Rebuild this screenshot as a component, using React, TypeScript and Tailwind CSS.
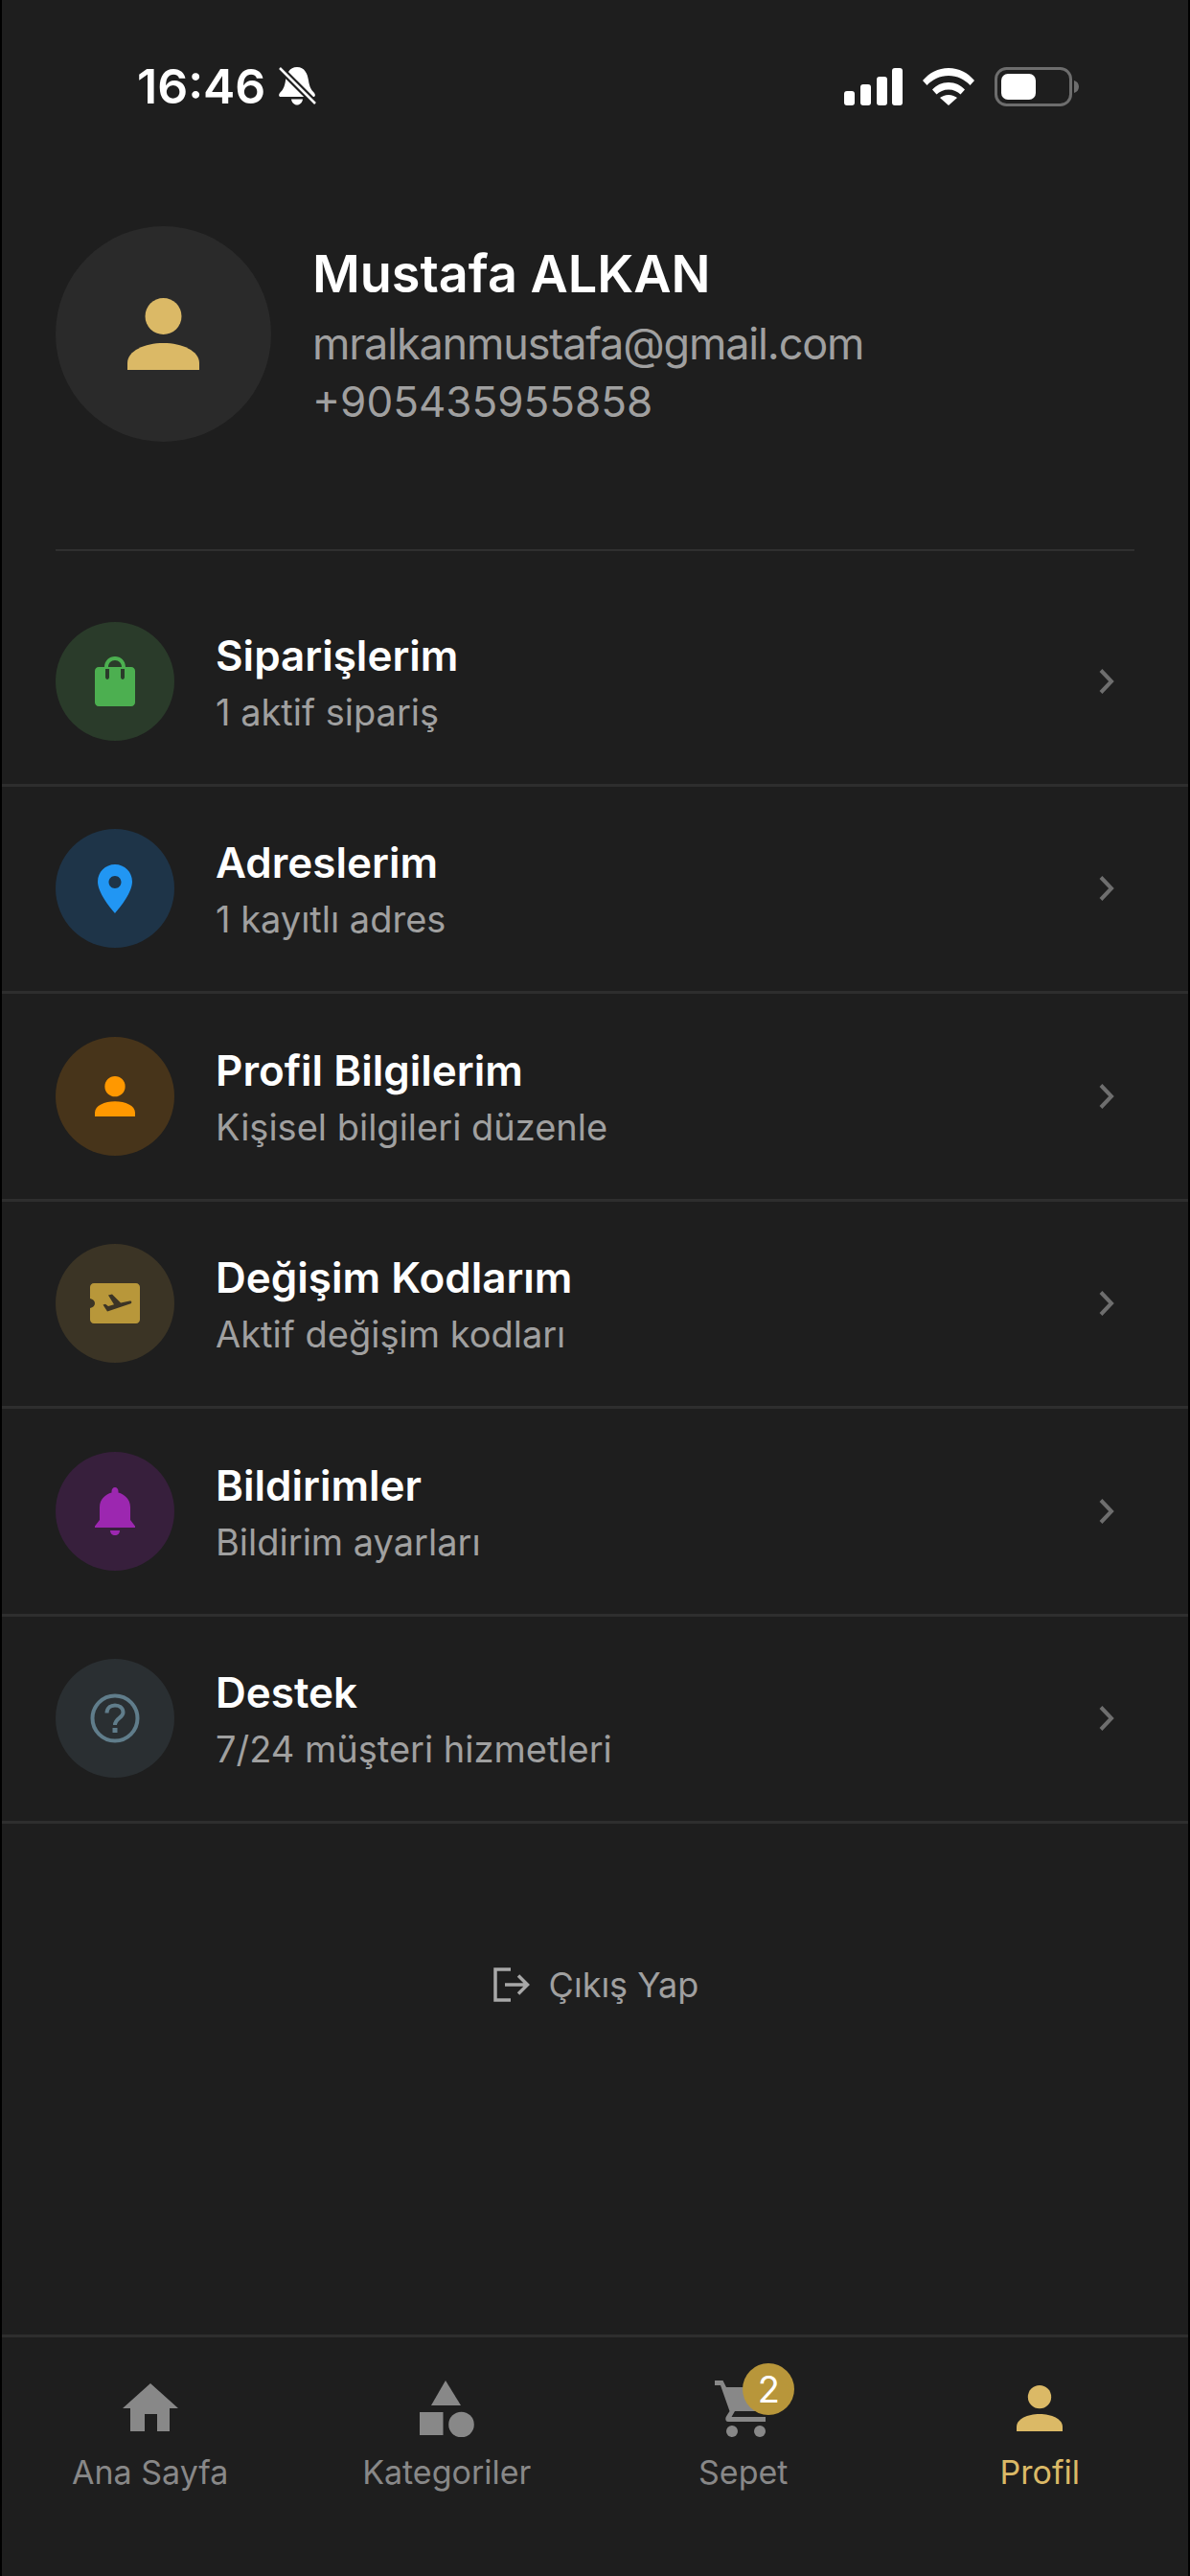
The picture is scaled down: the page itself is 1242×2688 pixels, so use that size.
import React from "react";

const font = { fontFamily: "Inter, 'Noto Sans', sans-serif" };

const PersonIcon = ({ className }: { className: string }) => (
  <svg viewBox="0 0 75 75" className={className} fill="currentColor">
    <circle cx="37.5" cy="19" r="19" />
    <path d="M0 75V68C0 55 18 47 37.5 47C57 47 75 55 75 68V75Z" />
  </svg>
);

const BagIcon = () => (
  <svg viewBox="0 0 42 52" className="w-[42px] h-[52px] text-[#4caf50]" fill="currentColor">
    <path
      fillRule="evenodd"
      d="M10 11C10 4.5 15 0 21 0C27 0 32 4.5 32 11H38C40.2 11 42 12.8 42 15V48C42 50.2 40.2 52 38 52H4C1.8 52 0 50.2 0 48V15C0 12.8 1.800 11 4 11ZM14 11H28C28 7 25 4 21 4C17 4 14 7 14 11ZM11 13V21.5C11 23 12 24 13 24C14 24 15 23 15 21.5V13ZM27 13V21.5C27 23 28 24 29 24C30 24 31 23 31 21.5V13Z"
    />
  </svg>
);

const PinIcon = () => (
  <svg viewBox="0 0 36 51" className="w-[36px] h-[51px] text-[#2196f3]" fill="currentColor">
    <path
      fillRule="evenodd"
      d="M18 0C8 0 0 7.800 0 18C0 29 12 44 18 51C24 44 36 29 36 18C36 7.800 28 0 18 0ZM18 12C21.600 12 24.500 14.900 24.500 18.500C24.500 22.100 21.600 25 18 25C14.400 25 11.500 22.100 11.500 18.500C11.500 14.900 14.400 12 18 12Z"
    />
  </svg>
);

const TicketIcon = () => (
  <svg viewBox="0 0 52 42" className="w-[52px] h-[42px]">
    <path
      fill="#b8973a"
      d="M4 0H48C50.200 0 52 1.800 52 4V38C52 40.200 50.200 42 48 42H4C1.800 42 0 40.200 0 38V26C3 25.500 5 23.500 5 21C5 18.500 3 16.500 0 16V4C0 1.800 1.800 0 4 0Z"
    />
    <path
      fill="#3b3425"
      d="M19 12.500L23 11.500L32 20.500L41.500 18.500C43.500 18 44 20.500 42.500 21.300L18 29.500L13.500 22.500L16 21.700L19 24L25 22.300Z"
    />
  </svg>
);

const BellIcon = () => (
  <svg viewBox="0 0 42 50" className="w-[42px] h-[50px] text-[#9c27b0]" fill="currentColor">
    <path d="M17.500 5.500V4C17.500 1.800 19 0 21 0C23 0 24.500 1.800 24.500 4V5.500C31 7.500 37 12 37 21V34L42 40.500V42H0V40.500L5 34V21C5 12 11 7.500 17.500 5.500Z" />
    <path d="M16 45H26C26 48 24 50 21 50C18 50 16 48 16 45Z" />
  </svg>
);

const HelpIcon = () => (
  <svg viewBox="0 0 52 52" className="w-[52px] h-[52px] text-[#607d8b]" fill="none" stroke="currentColor">
    <circle cx="26" cy="26" r="23.500" strokeWidth="4" />
    <path d="M17.500 20.500C17.500 15.500 21 12.500 26 12.500C31 12.500 34.500 15.500 34.500 20C34.500 25.500 26 26 26 33" strokeWidth="4" />
    <rect x="23.500" y="36" width="5" height="5" fill="currentColor" stroke="none" />
  </svg>
);

const Chevron = () => (
  <svg viewBox="0 0 18 28" className="w-[18px] h-[28px] text-[#6e6e6e]" fill="none" stroke="currentColor" strokeWidth="4">
    <path d="M3 2.500L14 14L3 25.500" />
  </svg>
);

const rows = [
  { title: "Siparişlerim", sub: "1 aktif sipariş", bg: "bg-[#2a3b2a]", icon: <BagIcon /> },
  { title: "Adreslerim", sub: "1 kayıtlı adres", bg: "bg-[#1e3448]", icon: <PinIcon /> },
  {
    title: "Profil Bilgilerim",
    sub: "Kişisel bilgileri düzenle",
    bg: "bg-[#47341a]",
    icon: <PersonIcon className="w-[42px] h-[42px] text-[#ff9800]" />,
  },
  { title: "Değişim Kodlarım", sub: "Aktif değişim kodları", bg: "bg-[#3b3425]", icon: <TicketIcon /> },
  { title: "Bildirimler", sub: "Bildirim ayarları", bg: "bg-[#371f3c]", icon: <BellIcon /> },
  { title: "Destek", sub: "7/24 müşteri hizmetleri", bg: "bg-[#2a2f32]", icon: <HelpIcon /> },
];

const MenuRow = ({ title, sub, bg, icon }: { title: string; sub: string; bg: string; icon: React.ReactNode }) => (
  <div className="h-[216.5px] flex items-center pl-[56px] pr-[76px] border-b-[3px] border-[#2e2e2e]">
    <div className={`w-[124px] h-[124px] rounded-full flex items-center justify-center ${bg}`}>{icon}</div>
    <div className="ml-[43px] flex-1 pt-[3px]">
      <div className="text-[44px] leading-[54px] font-semibold text-white">{title}</div>
      <div className="mt-[7px] text-[38px] leading-[50px] text-[#a0a0a0]">{sub}</div>
    </div>
    <Chevron />
  </div>
);

const NavItem = ({ icon, label, active }: { icon: React.ReactNode; label: string; active?: boolean }) => (
  <div className="flex flex-col items-center">
    <div className="h-[70px] flex items-end justify-center">{icon}</div>
    <div className={`mt-[15px] text-[34px] leading-[44px] ${active ? "text-[#dbb966]" : "text-[#888888]"}`}>{label}</div>
  </div>
);

export default function App() {
  return (
    <div className="w-[1242px] h-[2688px] bg-[#1e1e1e] border-x-2 border-black flex flex-col" style={font}>
      {/* Status bar */}
      <div className="flex justify-between items-center pt-[68px] pl-[141px] pr-[114px] h-[112px]">
        <div className="flex items-center gap-[14px]">
          <span className="text-[50px] leading-[44px] font-semibold text-white">16:46</span>
          <svg viewBox="0 0 40 40" className="w-[40px] h-[40px] text-white" fill="currentColor">
            <path d="M19 0C27 0 30 7 31 14C32 21 34 24 37 27C38.500 29 38 31 36 31H2C0 31 -.5 29 1 27C4 24 6 21 7 14C8 7 11 0 19 0Z" />
            <path d="M13 33.500H25C24.500 37 22 39.500 19 39.500C16 39.500 13.500 37 13 33.500Z" />
            <path d="M1 1L39 39" stroke="#1e1e1e" strokeWidth="7" />
            <path d="M1 1L38 38" stroke="currentColor" strokeWidth="2.500" />
          </svg>
        </div>
        <div className="flex items-center gap-[21px]">
          <svg viewBox="0 0 61 39" className="w-[61px] h-[39px] text-white" fill="currentColor">
            <rect x="0" y="24" width="11" height="15" rx="3" />
            <rect x="17" y="17" width="11" height="22" rx="3" />
            <rect x="34" y="9" width="11" height="30" rx="3" />
            <rect x="50" y="0" width="11" height="39" rx="3" />
          </svg>
          <svg viewBox="0 0 54 39" className="w-[54px] h-[39px] text-white" fill="currentColor">
            <path d="M0 13C7 5 16 0 27 0C38 0 47 5 54 13L49.500 18C44 12 36 8 27 8C18 8 10 12 4.500 18Z" />
            <path d="M10 22.500C14 18 20 15 27 15C34 15 40 18 44 22.500L39.500 27.500C36.500 24.500 32 22.500 27 22.500C22 22.500 17.500 24.500 14.500 27.500Z" />
            <path d="M18 31C20 29.500 23.500 28 27 28C30.500 28 34 29.500 36 31L27 39Z" />
          </svg>
          <svg viewBox="0 0 88 41" className="w-[88px] h-[41px]">
            <rect x="1.500" y="1.500" width="78" height="38" rx="11" fill="none" stroke="#6d6d6d" strokeWidth="3" />
            <rect x="7" y="7" width="36" height="27" rx="7" fill="#ffffff" />
            <path d="M83 14C86 15 88 17 88 20.500C88 24 86 26 83 27Z" fill="#6d6d6d" />
          </svg>
        </div>
      </div>

      {/* Profile header */}
      <div className="mt-[124px] mx-[56px] flex items-start pb-[112px] border-b-[2px] border-[#303030]">
        <div className="w-[225px] h-[225px] rounded-full bg-[#2a2a2a] flex items-center justify-center">
          <PersonIcon className="w-[75px] h-[75px] text-[#dbb966]" />
        </div>
        <div className="ml-[43px] pt-[18px]">
          <div className="text-[54px] leading-[64px] font-semibold text-white">Mustafa ALKAN</div>
          <div className="mt-[11px] text-[45px] leading-[60px] tracking-[-1.15px] text-[#a0a0a0]">mralkanmustafa@gmail.com</div>
          <div className="text-[44px] leading-[60px] text-[#a0a0a0]">+905435955858</div>
        </div>
      </div>

      {/* Menu */}
      <div className="mt-[29px]">
        {rows.map((r) => (
          <MenuRow key={r.title} {...r} />
        ))}
      </div>

      {/* Logout */}
      <div className="mt-[140px] flex items-center justify-center gap-[20px] pl-[2px]">
        <svg viewBox="0 0 38 36" className="w-[38px] h-[36px] text-[#a8a8a8]" fill="none" stroke="currentColor" strokeWidth="3.500">
          <path d="M18 2H2V34H18" />
          <path d="M12 18H35M26 8.500L35.500 18L26 27.500" />
        </svg>
        <span className="text-[36px] leading-[56px] text-[#a0a0a0]">Çıkış Yap</span>
      </div>

      {/* Bottom nav */}
      <div className="mt-auto h-[252px] border-t-[3px] border-[#2e2e2e] grid grid-cols-4 pt-[34px] items-start">
        <NavItem
          label="Ana Sayfa"
          icon={
            <svg viewBox="0 0 58 50" className="w-[58px] h-[50px] mb-[6px] text-[#888888]" fill="currentColor">
              <path d="M29 0L58 26H49V50H36V32H23V50H8V26H0Z" />
            </svg>
          }
        />
        <NavItem
          label="Kategoriler"
          icon={
            <svg viewBox="0 0 57 59" className="w-[57px] h-[59px] text-[#888888]" fill="currentColor">
              <path d="M27 0L43 26H12Z" />
              <rect x="0" y="33" width="24.500" height="24" />
              <circle cx="43.500" cy="46" r="13.300" />
            </svg>
          }
        />
        <NavItem
          label="Sepet"
          icon={
            <div className="relative">
              <svg viewBox="0 0 53 59" className="w-[53px] h-[59px] text-[#888888] -translate-x-[3px]" fill="currentColor">
                <path d="M0 0H8.500L12 7H53V32H21L17.500 38H53V43H14C11.500 43 10.500 40 12 37.500L15.500 32L6 5H0Z" />
                <circle cx="18" cy="53" r="6" />
                <circle cx="47" cy="53" r="6" />
              </svg>
              <div className="absolute -top-[18px] left-[26px] w-[54px] h-[54px] rounded-full bg-[#b8963a] flex items-center justify-center text-[38px] text-white">
                2
              </div>
            </div>
          }
        />
        <NavItem active label="Profil" icon={<PersonIcon className="w-[48px] h-[48px] mb-[6px] text-[#dbb966]" />} />
      </div>
    </div>
  );
}
